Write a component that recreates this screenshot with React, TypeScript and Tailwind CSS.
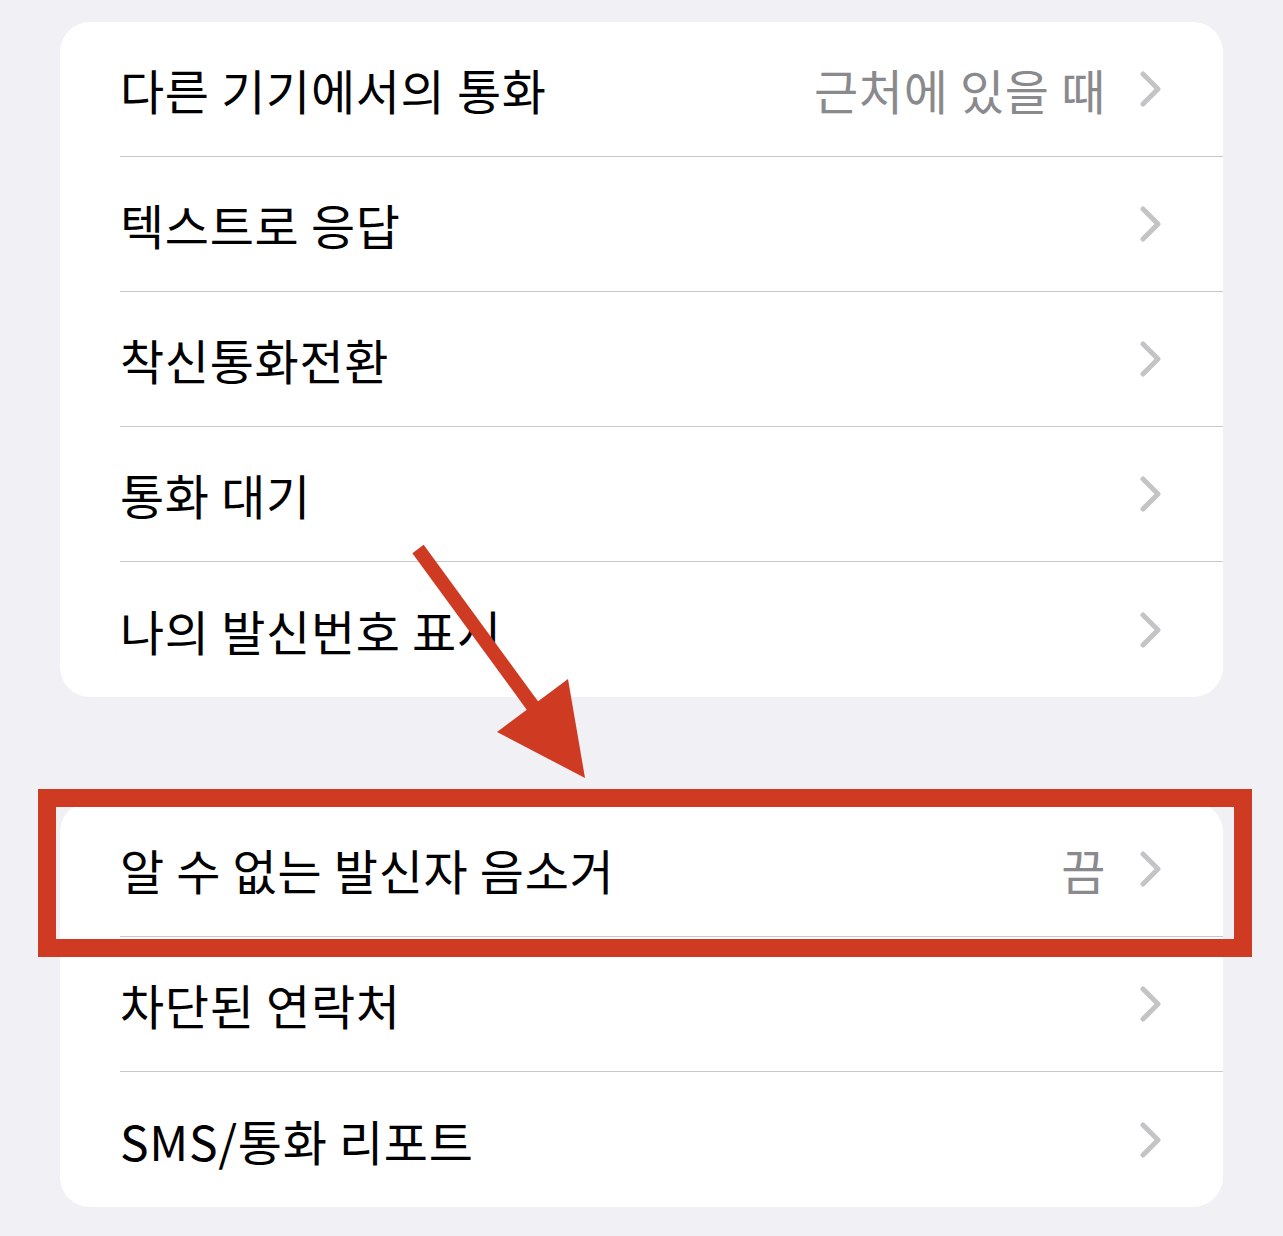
import { FunctionComponent } from "react";

interface Row {
  title: string;
  value?: string;
}

const topRows: Row[] = [
  { title: "다른 기기에서의 통화", value: "근처에 있을 때" },
  { title: "텍스트로 응답" },
  { title: "착신통화전환" },
  { title: "통화 대기" },
  { title: "나의 발신번호 표시" },
];

const bottomRows: Row[] = [
  { title: "알 수 없는 발신자 음소거", value: "끔" },
  { title: "차단된 연락처" },
  { title: "SMS/통화 리포트" },
];

const Chevron = () => (
  <svg width="22" height="36" viewBox="0 0 22 36" fill="none">
    <path
      d="M3 3 L18 18 L3 33"
      stroke="#c4c4c7"
      strokeWidth="5"
      strokeLinecap="round"
      strokeLinejoin="round"
    />
  </svg>
);

const Card: FunctionComponent<{ rows: Row[] }> = ({ rows }) => (
  <div className="bg-white rounded-[30px] overflow-hidden">
    {rows.map((r, i) => (
      <div key={r.title} className="pl-[60px]">
        <div
          className={
            "flex items-center h-[135px] pr-[61px] " +
            (i < rows.length - 1 ? "border-b border-[#c8c8cb]" : "")
          }
        >
          <span className="flex-1 text-[48px] tracking-[0.7px] text-black leading-none">
            {r.title}
          </span>
          {r.value && (
            <span className="text-[48px] tracking-[0.7px] text-[#8a8a8e] leading-none mr-[34px]">
              {r.value}
            </span>
          )}
          <Chevron />
        </div>
      </div>
    ))}
  </div>
);

const App: FunctionComponent = () => {
  return (
    <div
      className="relative w-[1283px] h-[1236px] bg-[#f0f0f5] px-[60px] pt-[22px] overflow-hidden"
      style={{ fontFamily: '"Noto Sans CJK KR", "Noto Sans", sans-serif' }}
    >
      <Card rows={topRows} />
      <div className="h-[105px]" />
      <Card rows={bottomRows} />

      <div className="absolute left-[38px] top-[789px] w-[1214px] h-[168px] border-[18px] border-[#cf3b22]" />

      <svg
        className="absolute inset-0 pointer-events-none"
        width="1283"
        height="1236"
        viewBox="0 0 1283 1236"
      >
        <line x1="418" y1="549" x2="540" y2="716" stroke="#cf3b22" strokeWidth="14" />
        <polygon points="497,732 568,679 585,778" fill="#cf3b22" />
      </svg>
    </div>
  );
};

export default App;
